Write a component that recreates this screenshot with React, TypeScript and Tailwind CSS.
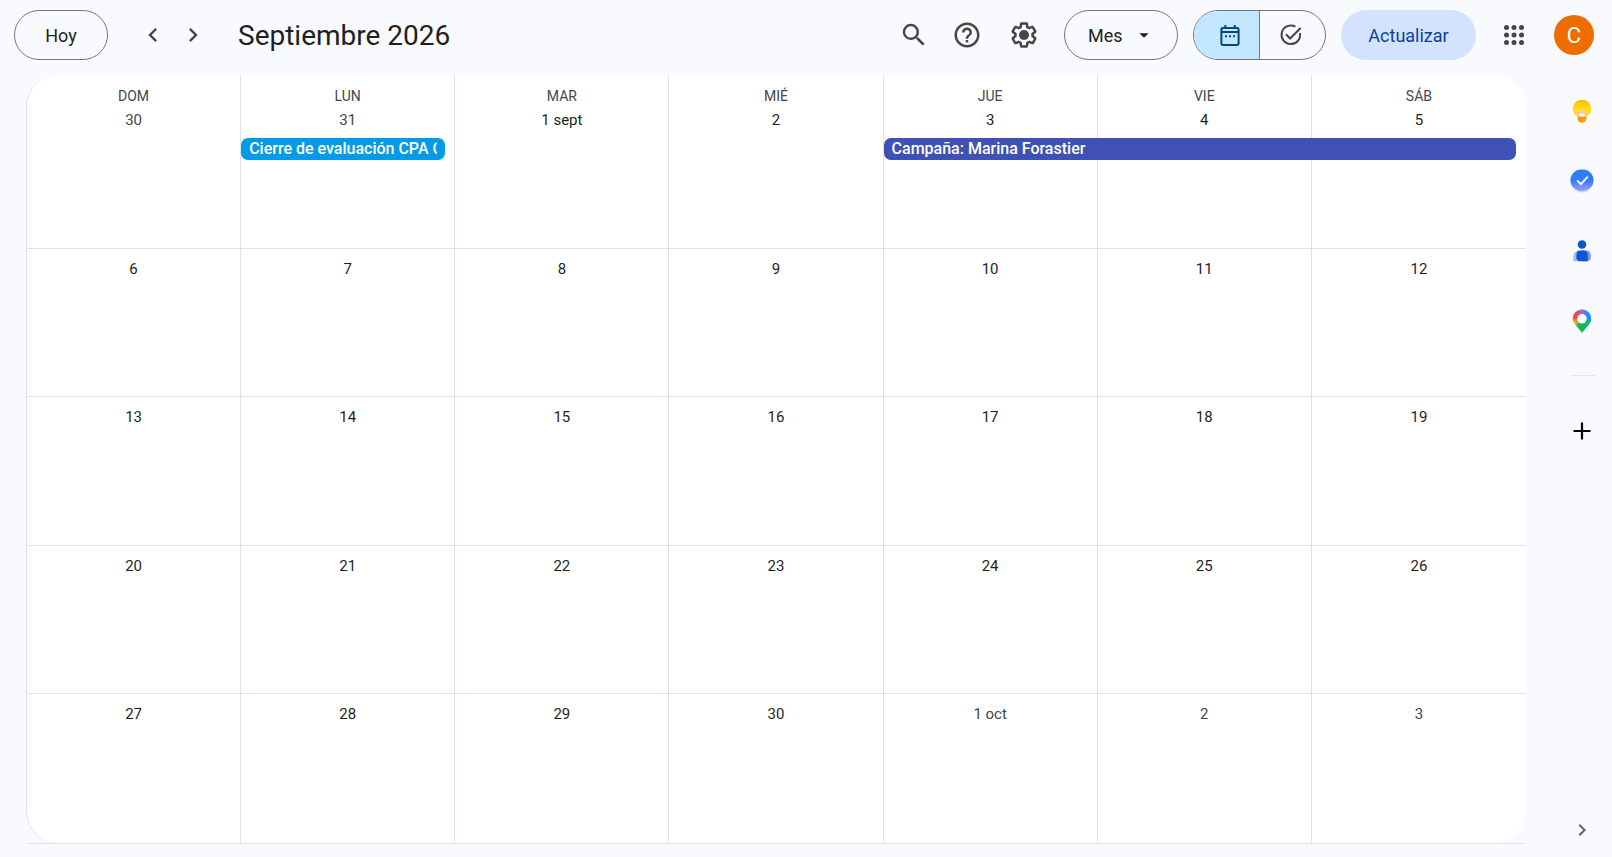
import React, { useState } from 'react';
import { MdArrowDropDown, MdChevronLeft, MdChevronRight, MdHelpOutline, MdSearch } from 'react-icons/md';

type Day = { label: string; outside?: boolean; event?: CalendarEvent };
type CalendarEvent = { title: string; className: string };

const WEEKDAYS = ['DOM', 'LUN', 'MAR', 'MIÉ', 'JUE', 'VIE', 'SÁB'];

const range = (from: number, to: number): Day[] =>
    Array.from({ length: to - from + 1 }, (_, i) => ({ label: String(from + i) }));

const WEEKS: Day[][] = [
    [
        { label: '30', outside: true },
        { label: '31', outside: true, event: { title: 'Cierre de evaluación CPA C', className: 'mr-[9px] bg-[#039be5]' } },
        { label: '1 sept' },
        { label: '2' },
        { label: '3', event: { title: 'Campaña: Marina Forastier', className: 'w-[calc(300%-7px)] bg-[#3f51b5]' } },
        { label: '4' },
        { label: '5' },
    ],
    range(6, 12),
    range(13, 19),
    range(20, 26),
    [...range(27, 30), { label: '1 oct', outside: true }, { label: '2', outside: true }, { label: '3', outside: true }],
];

const SettingsIcon = () => (
    <svg viewBox="0 0 24 24" className="size-[30px]" fill="currentColor">
        <path d="M13.85 22.25h-3.7c-.74 0-1.36-.54-1.45-1.27l-.27-1.89c-.27-.14-.53-.29-.79-.46l-1.8.72c-.7.26-1.47-.03-1.81-.65L2.2 15.53c-.35-.66-.2-1.44.36-1.88l1.53-1.19c-.01-.15-.02-.3-.02-.46 0-.15.01-.31.02-.46l-1.52-1.19c-.59-.45-.74-1.26-.37-1.88l1.85-3.19c.34-.62 1.11-.9 1.79-.63l1.81.73c.26-.17.52-.32.78-.46l.27-1.91c.09-.7.71-1.25 1.44-1.25h3.7c.74 0 1.36.54 1.45 1.27l.27 1.89c.27.14.53.29.79.46l1.8-.72c.71-.26 1.48.03 1.82.65l1.84 3.18c.36.66.2 1.44-.36 1.88l-1.52 1.19c.01.15.02.3.02.46s-.01.31-.02.46l1.52 1.19c.56.45.72 1.23.37 1.86l-1.86 3.22c-.34.62-1.11.9-1.8.63l-1.8-.72c-.26.17-.52.32-.78.46l-.27 1.91c-.1.68-.72 1.22-1.46 1.22zm-3.23-2h2.76l.37-2.55.53-.22c.44-.18.88-.44 1.34-.78l.45-.34 2.38.96 1.38-2.4-2.03-1.58.07-.56c.03-.26.06-.51.06-.78s-.03-.53-.06-.78l-.07-.56 2.03-1.58-1.39-2.4-2.39.96-.45-.35c-.42-.32-.87-.58-1.33-.77l-.52-.22-.37-2.55h-2.76l-.37 2.55-.53.21c-.44.19-.88.44-1.34.79l-.45.33-2.38-.95-1.39 2.39 2.03 1.58-.07.56a7 7 0 0 0-.06.79c0 .26.02.53.06.78l.07.56-2.03 1.58 1.38 2.4 2.39-.96.45.35c.43.33.86.58 1.33.77l.53.22z" />
        <circle cx="12" cy="12" r="4" />
    </svg>
);

const CalendarIcon = () => (
    <svg viewBox="0 0 24 24" className="size-6" fill="none" stroke="currentColor">
        <path d="M7.3 2v4M16.7 2v4" strokeWidth="2" />
        <rect x="3.4" y="5" width="17.2" height="17" rx="1.4" strokeWidth="2" />
        <path d="M3.4 9h17.2" strokeWidth="1.8" />
        <path d="M7 13.2h2M11 13.2h2M15 13.2h2" strokeWidth="2" />
    </svg>
);

const TaskIcon = () => (
    <svg viewBox="0 0 24 24" className="size-6" fill="none" stroke="currentColor" strokeWidth="2">
        <path d="M16.4 3.7A9.3 9.3 0 1 0 21 10.2" />
        <path d="m6.9 11.3 4.2 4.2L21.6 5" />
    </svg>
);

const AppsIcon = () => (
    <svg viewBox="0 0 24 24" className="size-[30px]" fill="currentColor">
        {[6, 12, 18].flatMap((y) => [6, 12, 18].map((x) => <circle key={`${x}-${y}`} cx={x} cy={y} r="2" />))}
    </svg>
);

const KeepIcon = () => (
    <svg viewBox="0 0 24 24" className="size-6">
        <defs>
            <linearGradient id="keepBulb" x1="0" y1="0" x2="0" y2="1">
                <stop offset="0" stopColor="#fcbd00" />
                <stop offset="0.6" stopColor="#ffe017" />
                <stop offset="1" stopColor="#ffcf3d" />
            </linearGradient>
            <radialGradient id="keepGlow" cx="0.5" cy="0.9" r="0.8">
                <stop offset="0" stopColor="#fff" />
                <stop offset="0.35" stopColor="#ffc9d8" />
                <stop offset="1" stopColor="#ffc9a0" stopOpacity="0" />
            </radialGradient>
        </defs>
        <path d="M12 .7a9 9 0 0 0-4.6 16.8h9.2A9 9 0 0 0 12 .7z" fill="url(#keepBulb)" />
        <path d="M7.6 17.7V13a4.4 4.4 0 0 1 8.8 0v4.7z" fill="url(#keepGlow)" />
        <path d="M7.6 17.5h8.8v1.9a4.4 4.4 0 0 1-8.8 0z" fill="#f99b00" />
        <ellipse cx="12" cy="16.2" rx="2.6" ry="1.4" fill="#fff" />
    </svg>
);

const TasksIcon = () => (
    <svg viewBox="0 0 24 24" className="size-6">
        <defs>
            <linearGradient id="tasksDisc" x1="0" y1="0" x2="0" y2="1">
                <stop offset="0.5" stopColor="#2f7df8" />
                <stop offset="1" stopColor="#a69cf8" />
            </linearGradient>
        </defs>
        <ellipse cx="12" cy="13.6" rx="10" ry="10" fill="#b9e2fd" />
        <rect x="0.4" y="0.6" width="23.2" height="21.4" rx="10.7" fill="url(#tasksDisc)" />
        <path d="m7 11.3 3.9 3.9 7-7.6" fill="none" stroke="#fff" strokeWidth="1.7" />
    </svg>
);

const ContactsIcon = () => (
    <svg viewBox="0 0 24 24" className="size-6">
        <circle cx="12" cy="5.5" r="4.3" fill="#0b57d0" />
        <path d="M8 11.8h6v10.4H3.4v-4.4a6 6 0 0 1 4.6-6z" fill="#9dbcfb" />
        <path d="M12 11.6h4.4a4.3 4.3 0 0 1 4.4 4.4v2.2a4 4 0 0 1-4 4H12z" fill="#6f9bf8" />
        <path d="M10.4 11.6h3.2a4.2 4.2 0 0 1 4.2 4.2v6.4h-7.4a4 4 0 0 1-4-4v-2.4a4.2 4.2 0 0 1 4-4.2z" fill="#0b57d0" />
    </svg>
);

const MapsIcon = () => (
    <svg viewBox="0 0 24 24" className="size-6">
        <defs>
            <clipPath id="mapsPin">
                <path d="M12 .6a9.2 9.2 0 0 0-9.2 9.2c0 3.2 1.6 5.2 3.6 7.5 2 2.2 3.6 4 5.6 6.4 2-2.4 3.6-4.2 5.6-6.4 2-2.3 3.6-4.3 3.6-7.5A9.2 9.2 0 0 0 12 .6z" />
            </clipPath>
            <linearGradient id="mapsTop" x1="0" y1="0" x2="1" y2="0">
                <stop offset="0.25" stopColor="#f9423a" />
                <stop offset="0.5" stopColor="#8b6ff0" />
                <stop offset="0.7" stopColor="#3186ff" />
            </linearGradient>
            <linearGradient id="mapsBottom" x1="0" y1="0.2" x2="1" y2="0.5">
                <stop offset="0.12" stopColor="#ff7a1f" />
                <stop offset="0.3" stopColor="#e5c81a" />
                <stop offset="0.48" stopColor="#12b85a" />
                <stop offset="1" stopColor="#0ebc5f" />
            </linearGradient>
            <linearGradient id="mapsFade" x1="0" y1="0" x2="0" y2="1">
                <stop offset="0.35" stopColor="#fff" />
                <stop offset="0.55" stopColor="#000" />
            </linearGradient>
            <mask id="mapsMask">
                <rect width="24" height="24" fill="url(#mapsFade)" />
            </mask>
        </defs>
        <g clipPath="url(#mapsPin)">
            <rect width="24" height="24" fill="url(#mapsBottom)" />
            <rect width="24" height="24" fill="url(#mapsTop)" mask="url(#mapsMask)" />
        </g>
        <circle cx="12" cy="9.8" r="4.8" fill="#fff" />
    </svg>
);

const Header: React.FC = () => {
    const [view, setView] = useState('Mes');

    return (
        <header className="flex h-[70px] shrink-0 items-center pl-[14px] pr-[18px] text-[#444746]">
            <button className="h-[50px] w-[94px] rounded-full border border-[#747775] text-[18px] font-[450] text-[#1f1f1f]">Hoy</button>
            <div className="ml-[25px] flex">
                <button aria-label="Mes anterior" className="flex size-10 items-center justify-center">
                    <MdChevronLeft className="size-7" />
                </button>
                <button aria-label="Mes siguiente" className="flex size-10 items-center justify-center">
                    <MdChevronRight className="size-7" />
                </button>
            </div>
            <h1 className="ml-[25px] grow whitespace-nowrap pt-[2px] text-[28px] leading-9 text-[#1f1f1f]">Septiembre 2026</h1>

            <div className="flex items-center">
                <button aria-label="Buscar" className="flex size-[50px] items-center justify-center">
                    <MdSearch className="size-[30px]" />
                </button>
                <button aria-label="Ayuda" className="ml-[3px] flex size-[50px] items-center justify-center">
                    <MdHelpOutline className="size-[30px]" />
                </button>
                <button aria-label="Configuración" className="ml-[7px] flex size-[50px] items-center justify-center">
                    <SettingsIcon />
                </button>
            </div>

            <label className="relative ml-[15px] text-[#1f1f1f]">
                <select
                    aria-label="Vista"
                    value={view}
                    onChange={(e) => setView(e.target.value)}
                    className="h-[50px] w-[114px] appearance-none rounded-full border border-[#747775] bg-transparent pl-[23px] text-[18px] font-[450]"
                >
                    <option>Día</option>
                    <option>Semana</option>
                    <option>Mes</option>
                    <option>Año</option>
                </select>
                <MdArrowDropDown className="pointer-events-none absolute right-[23px] top-[14px] size-[22px]" />
            </label>

            <div className="ml-[15px] flex h-[50px] w-[133px] overflow-hidden rounded-full border border-[#747775]">
                <button aria-label="Calendario" className="flex w-[66px] items-center justify-center border-r border-[#747775] bg-[#c2e7ff] pl-[6px] text-[#004a77]">
                    <CalendarIcon />
                </button>
                <button aria-label="Tareas" className="flex grow items-center justify-center pr-1">
                    <TaskIcon />
                </button>
            </div>

            <button className="ml-[15px] h-[50px] w-[135px] rounded-full bg-[#d3e3fd] text-[18px] font-[450] text-[#0842a0]">Actualizar</button>
            <button aria-label="Aplicaciones de Google" className="ml-[13px] flex size-[50px] items-center justify-center">
                <AppsIcon />
            </button>
            <button aria-label="Cuenta" className="ml-[15px] size-10 rounded-full bg-[#ef6c00] text-[22px] text-white">C</button>
        </header>
    );
};

const MonthGrid: React.FC = () => (
    <main className="min-w-0 grow border-b border-[#dde3ea]">
        <div className="h-full overflow-hidden rounded-[32px] border-l border-[#dde3ea] bg-white">
            <table className="h-full w-full table-fixed border-separate border-spacing-0 text-center">
                <thead>
                    <tr className="h-[25px]">
                        {WEEKDAYS.map((name) => (
                            <th key={name} className="border-r border-[#dde3ea] p-0 pt-[17px] text-[14px] font-normal leading-[8px] text-[#444746] last:border-r-0">
                                {name}
                            </th>
                        ))}
                    </tr>
                </thead>
                <tbody>
                    {WEEKS.map((week, i) => (
                        <tr key={i} className="group h-1/5">
                            {week.map((day) => (
                                <td key={day.label} className="border-b border-r border-[#dde3ea] p-0 pt-2 align-top last:border-r-0 group-last:border-b-0">
                                    <div className={day.outside ? 'text-[15px] leading-6 text-[#444746]' : 'text-[15px] font-[450] leading-6 text-[#1f1f1f]'}>
                                        {day.label}
                                    </div>
                                    {day.event && (
                                        <div className={`relative mt-[6px] h-[22px] rounded-[7px] px-2 text-left text-[16px] font-medium leading-[22px] text-white ${day.event.className}`}>
                                            <div className="overflow-hidden whitespace-nowrap">{day.event.title}</div>
                                        </div>
                                    )}
                                </td>
                            ))}
                        </tr>
                    ))}
                </tbody>
            </table>
        </div>
    </main>
);

const SidePanel: React.FC = () => {
    const apps = [
        { name: 'Keep', icon: <KeepIcon /> },
        { name: 'Tasks', icon: <TasksIcon /> },
        { name: 'Contactos', icon: <ContactsIcon /> },
        { name: 'Maps', icon: <MapsIcon /> },
    ];

    return (
        <aside className="flex w-[60px] shrink-0 flex-col items-center pt-[11px]">
            <div className="flex flex-col gap-5">
                {apps.map((app) => (
                    <button key={app.name} aria-label={app.name} className="flex size-[50px] items-center justify-center">
                        {app.icon}
                    </button>
                ))}
            </div>
            <hr className="mt-[29px] w-[25px] border-[#e3e5e8]" />
            <button aria-label="Obtener complementos" className="mt-[30px] flex size-[50px] items-center justify-center text-black">
                <svg viewBox="0 0 24 24" className="size-6" fill="none" stroke="currentColor" strokeWidth="2.2">
                    <path d="M12 3.5v17M3.5 12h17" />
                </svg>
            </button>
            <button aria-label="Ocultar panel lateral" className="mb-[-11px] mt-auto flex size-[50px] items-center justify-center text-[#5f6368]">
                <MdChevronRight className="size-6" />
            </button>
        </aside>
    );
};

const App: React.FC = () => (
    <div className="flex h-screen min-h-[600px] flex-col overflow-hidden bg-[#f8fafd] font-['Roboto',sans-serif]">
        <Header />
        <div className="flex grow pb-[13px] pl-[26px] pt-[5px]">
            <MonthGrid />
            <div className="w-[26px] shrink-0" />
            <SidePanel />
        </div>
    </div>
);

export default App;
